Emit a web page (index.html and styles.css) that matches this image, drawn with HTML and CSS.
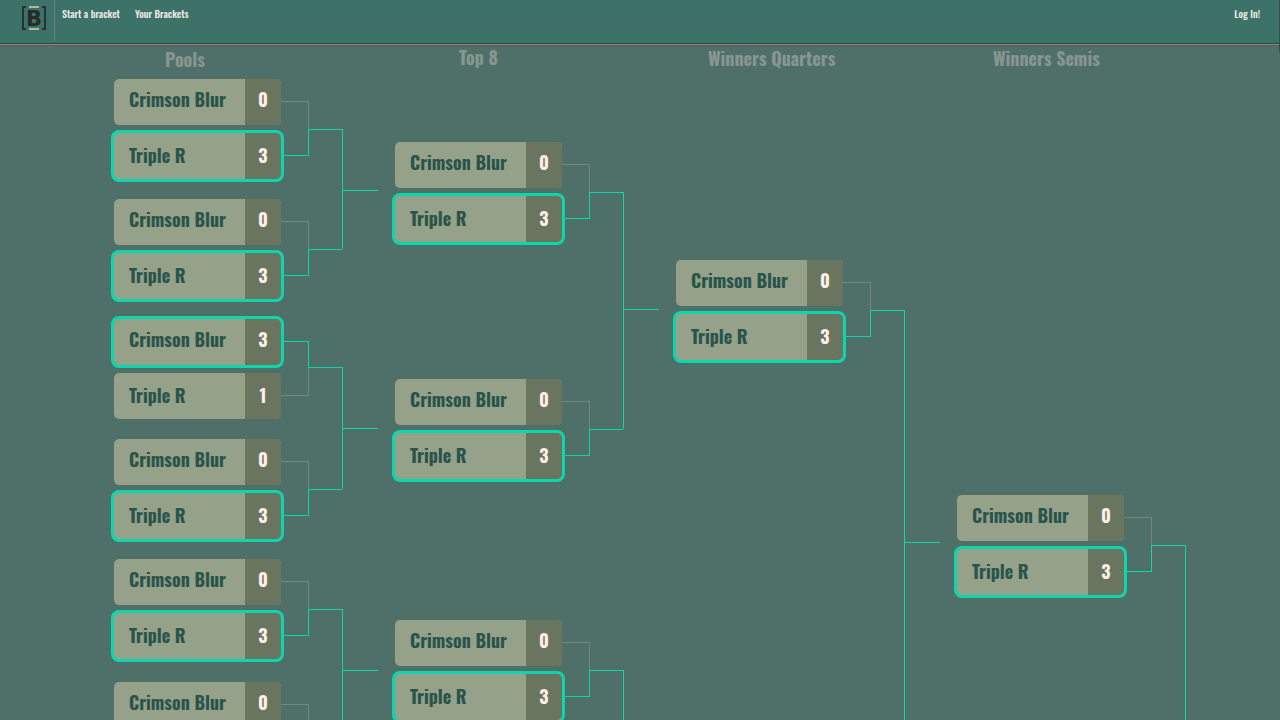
FILE: index.html
```html
<!DOCTYPE html>
<html lang="en">
<head>
<meta charset="utf-8">
<title>Bracket</title>
<link rel="stylesheet" href="styles.css">
</head>
<body>
<header class="topbar">
  <a class="logo" href="#" aria-label="Home">
    <svg width="26" height="26" viewBox="0 0 26 26" aria-hidden="true">
      <path d="M5 2H2v22h3M21 2h3v22h-3" fill="none" stroke="#26322f" stroke-width="2"/>
      <path d="M8 2h10M8 24h10" stroke="#b3b698" stroke-width="2"/>
      <text class="logo-letter" x="13" y="21" text-anchor="middle">B</text>
    </svg>
  </a>
  <nav class="links">
    <a href="#">Start a bracket</a>
    <a href="#">Your Brackets</a>
  </nav>
  <a class="login" href="#">Log In!</a>
</header>
<main class="bracket" id="bracket"></main>
<script src="bracket.js"></script>
</body>
</html>
```
FILE: styles.css
```css
* {
  box-sizing: border-box;
}

:root {
  --win: #0cd6ae;
  --lose: #70897c;
}

body {
  margin: 0;
  height: 100vh;
  display: flex;
  flex-direction: column;
  overflow: hidden;
  background: #4f7068;
  font-family: "Oswald", "Liberation Sans Narrow", "Liberation Sans", sans-serif;
  font-weight: 700;
}

.topbar {
  position: relative;
  flex: none;
  display: flex;
  align-items: flex-start;
  height: 46px;
  background: #3c7267;
  border-bottom: 1px solid #4c5f58;
  box-shadow: inset 0 -1px #a08478, inset 0 -2px #244c45;
  font-size: 10px;
  font-weight: 500;
  line-height: 16px;
}

.topbar::after {
  content: "";
  position: absolute;
  top: 0;
  right: 0;
  width: 1px;
  height: 53px;
  background: #2a544b;
}

.topbar a {
  color: #f2ebe6;
  text-decoration: none;
}

.logo {
  width: 55px;
  height: 41px;
  padding: 5px 0 0 21px;
  border-right: 1px solid #6d8279;
}

.logo svg {
  display: block;
}

.logo-letter {
  fill: #262b2a;
  font: 700 21px "DejaVu Sans", sans-serif;
}

.links {
  flex: 1;
  display: flex;
  gap: 15px;
  padding: 6px 0 0 7px;
}

.login {
  padding: 6px 20px 0 0;
}

.bracket {
  flex: 1;
  min-height: 0;
  display: flex;
  padding-left: 114px;
  overflow: hidden;
}

.round {
  flex: none;
  width: 281px;
}

.round-title {
  margin: 0;
  height: 33px;
  font-size: 18px;
  line-height: 22px;
  color: #879690;
}

.round-pairs,
.pair-matches {
  display: grid;
}

.pair {
  display: flex;
}

.match {
  display: flex;
  height: 100px;
}

.entrants {
  display: flex;
  flex-direction: column;
  gap: 8px;
  width: 167px;
}

.entrant {
  display: flex;
  height: 46px;
  border-radius: 5px;
  background: #95a188;
  font-size: 18px;
  line-height: 41px;
}

.entrant + .entrant {
  line-height: 45px;
}

.entrant.won {
  box-shadow: 0 0 0 3px var(--win);
}

.name {
  flex: 1;
  padding-left: 15px;
  color: #29544c;
}

.score {
  width: 36px;
  border-radius: 0 5px 5px 0;
  background: #6a755f;
  color: #fdeeea;
  text-align: center;
}

.arms {
  width: 28px;
  padding: 22px 0 23px;
  display: flex;
  flex-direction: column;
}

.arm-top {
  height: 28px;
  border: solid var(--lose);
  border-width: 1px 1px 0 0;
}

.arm-bottom {
  flex: 1;
  border: solid var(--win);
  border-width: 0 1px 1px 0;
}

.top-won .arm-top {
  height: 26px;
  border-color: var(--win);
}

.top-won .arm-bottom {
  border-color: var(--lose);
}

.lead {
  width: 34px;
  height: 1px;
  margin-top: 50px;
  margin-left: -1px;
  background: var(--win);
}

.top-won .lead {
  margin-top: 48px;
}

.join {
  width: 36px;
  margin: 50px 0;
  border-left: 1px solid var(--win);
}

.join-from-top {
  margin-top: 48px;
}

.join-out {
  border-bottom: 1px solid var(--win);
}
```
FILE: bracket.js
```js
const rounds = [
  {
    title: "Pools", indent: 51, drop: 2, start: 0, pairGap: 20, out: 62,
    pairs: [
      { gap: 20, scores: [[0, 3], [0, 3]] },
      { gap: 20, scores: [[3, 1], [0, 3]] },
      { gap: 23, scores: [[0, 3], [0, 3]] }
    ]
  },
  {
    title: "Top 8", indent: 64, drop: 0, start: 63, pairGap: 141, out: 118,
    pairs: [
      { gap: 137, scores: [[0, 3], [0, 3]] },
      { gap: 137, scores: [[0, 3], [0, 3]] }
    ]
  },
  {
    title: "Winners Quarters", indent: 32, drop: 1, start: 181, pairGap: 0, out: 233,
    pairs: [{ gap: 365, scores: [[0, 3], [0, 3]] }]
  },
  {
    title: "Winners Semis", indent: 36, drop: 1, start: 416, pairGap: 0, out: 350,
    pairs: [{ gap: 600, scores: [[0, 3], [0, 3]] }]
  }
];

const entrant = (name, score, won) =>
  `<div class="entrant${won ? " won" : ""}"><span class="name">${name}</span><span class="score">${score}</span></div>`;

const match = ([a, b]) =>
  `<div class="match${a > b ? " top-won" : ""}">
    <div class="entrants">${entrant("Crimson Blur", a, a > b)}${entrant("Triple R", b, b > a)}</div>
    <div class="arms"><div class="arm-top"></div><div class="arm-bottom"></div></div>
    <div class="lead"></div>
  </div>`;

const pair = ({ gap, scores }, out) =>
  `<div class="pair">
    <div class="pair-matches" style="gap:${gap}px">${scores.map(match).join("")}</div>
    <div class="join${scores[0][0] > scores[0][1] ? " join-from-top" : ""}"><div class="join-out" style="height:${out}px"></div></div>
  </div>`;

document.getElementById("bracket").innerHTML = rounds.map(r =>
  `<section class="round">
    <h2 class="round-title" style="padding:${r.drop}px 0 0 ${r.indent}px">${r.title}</h2>
    <div class="round-pairs" style="gap:${r.pairGap}px;padding-top:${r.start}px">${r.pairs.map(p => pair(p, r.out)).join("")}</div>
  </section>`).join("");
```
